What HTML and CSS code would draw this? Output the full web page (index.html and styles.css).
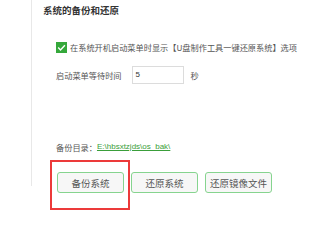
FILE: index.html
```html
<!DOCTYPE html>
<html>
<head>
<meta charset="utf-8">
<link rel="stylesheet" href="styles.css">
</head>
<body>
<div class="page">
  <div class="side"></div>
  <div class="main">
    <div class="title">系统的备份和还原</div>
    <div class="opts">
      <div class="check-row">
        <span class="cb"><svg width="11" height="11" viewBox="0 0 11 11"><rect width="11" height="11" fill="#35a83b"/><path d="M2.2 5.6 L4.5 7.9 L8.9 3.2" fill="none" stroke="#fff" stroke-width="1.4"/></svg></span>
        <span class="cb-text">在系统开机启动菜单时显示【U盘制作工具一键还原系统】选项</span>
      </div>
      <div class="wait-row">
        <span class="lbl">启动菜单等待时间</span>
        <span class="inp">5</span>
        <span class="unit">秒</span>
      </div>
      <div class="dir-row">
        <span class="lbl">备份目录：</span><a class="link">E:\hbsxtzjds\os_bak\</a>
      </div>
      <div class="btns">
        <span class="btn">备份系统</span>
        <span class="btn">还原系统</span>
        <span class="btn">还原镜像文件</span>
      </div>
    </div>
  </div>
  <div class="mark"></div>
</div>
</body>
</html>
```
FILE: styles.css
```css
html, body {
  margin: 0;
  padding: 0;
  background: #fff;
}
body {
  font-family: "Noto Sans CJK SC", "Liberation Sans", sans-serif;
  color: #555;
  width: 334px;
  height: 248px;
  overflow: hidden;
}
.page {
  position: relative;
  display: flex;
  align-items: flex-start;
}
.side {
  width: 31px;
  height: 186px;
  border-right: 1px solid #e8e8e8;
  flex: none;
}
.main {
  padding-left: 11px;
  flex: 1;
}
.title {
  font-size: 9.5px;
  font-weight: bold;
  color: #333;
  line-height: 20px;
  height: 20px;
}
.opts {
  padding-left: 13px;
}
.check-row {
  margin-top: 22px;
  display: flex;
  align-items: center;
  height: 11px;
  gap: 3px;
}
.cb {
  display: block;
  width: 11px;
  height: 11px;
}
.cb svg {
  display: block;
}
.cb-text {
  font-size: 8.2px;
  line-height: 11px;
  white-space: nowrap;
}
.wait-row {
  margin-top: 13px;
  display: flex;
  align-items: center;
  height: 18px;
}
.lbl {
  font-size: 8.2px;
  white-space: nowrap;
}
.inp {
  margin-left: 10px;
  box-sizing: border-box;
  width: 52px;
  height: 18px;
  border: 1px solid #dcdcdc;
  font-size: 8px;
  line-height: 16px;
  padding-left: 3px;
  color: #333;
  font-family: "Liberation Sans", sans-serif;
}
.unit {
  margin-left: 7px;
  font-size: 8.2px;
}
.dir-row {
  margin-top: 57px;
  height: 12px;
  line-height: 12px;
  display: flex;
  align-items: center;
}
.link {
  color: #3a9e3a;
  text-decoration: underline;
  font-size: 8px;
  font-family: "Liberation Sans", sans-serif;
}
.btns {
  margin-top: 19px;
  margin-left: 1px;
  display: flex;
  gap: 7px;
}
.btn {
  box-sizing: border-box;
  width: 67px;
  height: 21px;
  border: 1px solid #86d48f;
  border-radius: 3px;
  background: #f7f7f7;
  font-size: 9.5px;
  color: #555;
  display: flex;
  align-items: center;
  justify-content: center;
}
.mark {
  position: absolute;
  left: 50px;
  top: 160px;
  width: 80px;
  height: 50px;
  box-sizing: border-box;
  border: 2px solid #ec3a3a;
}
```
